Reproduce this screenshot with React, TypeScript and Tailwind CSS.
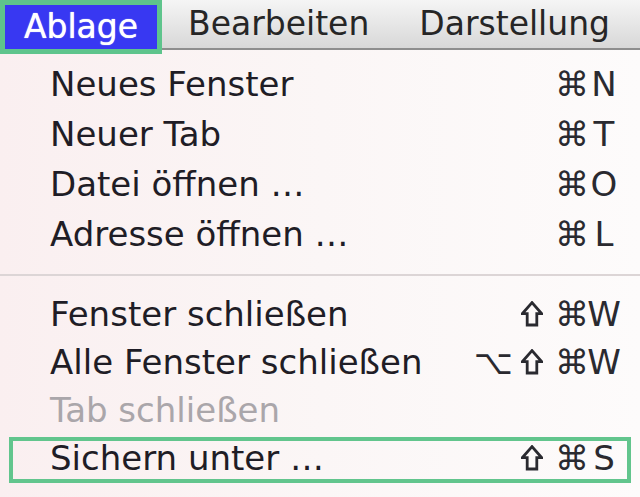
type Item = { label: string; mods?: string[]; key?: string; disabled?: boolean; marked?: boolean };

const groups: Item[][] = [
  [
    { label: 'Neues Fenster', mods: ['cmd'], key: 'N' },
    { label: 'Neuer Tab', mods: ['cmd'], key: 'T' },
    { label: 'Datei öffnen …', mods: ['cmd'], key: 'O' },
    { label: 'Adresse öffnen …', mods: ['cmd'], key: 'L' },
  ],
  [
    { label: 'Fenster schließen', mods: ['shift', 'cmd'], key: 'W' },
    { label: 'Alle Fenster schließen', mods: ['opt', 'shift', 'cmd'], key: 'W' },
    { label: 'Tab schließen', disabled: true },
    { label: 'Sichern unter …', mods: ['shift', 'cmd'], key: 'S', marked: true },
  ],
];

function ShiftIcon() {
  return (
    <svg width="22" height="26" viewBox="0 0 22 26" className="mr-[12px] block shrink-0">
      <path
        d="M11 1.6 L1.4 12.6 H6.2 V24 H15.8 V12.6 H20.6 Z"
        fill="none"
        stroke="#2a2a30"
        strokeWidth="2.8"
        strokeLinejoin="miter"
      />
    </svg>
  );
}

function Mod({ name }: { name: string }) {
  if (name === 'shift') return <ShiftIcon />;
  if (name === 'opt') return <span className="mr-[8px] shrink-0">⌥</span>;
  return <span className="-mr-[3px] shrink-0">⌘</span>;
}

function MenuRow({ item, tall }: { item: Item; tall: boolean }) {
  return (
    <div className={`relative flex items-center pl-[50px] pr-[18px] ${tall ? 'h-[50px]' : 'h-[48px]'}`}>
      <span className={`flex-1 ${item.disabled ? 'text-[#aaa6aa]' : 'text-[#1f1d26]'}`}>{item.label}</span>
      {item.key && (
        <span className="flex shrink-0 items-center text-[#2a2a30]">
          {item.mods?.map((m) => <Mod key={m} name={m} />)}
          <span className="w-[36px] shrink-0 text-center">{item.key}</span>
        </span>
      )}
      {item.marked && (
        <div className="absolute left-[9px] right-[9px] top-[3px] bottom-[-1px] border-[4px] border-[#62c58d]" />
      )}
    </div>
  );
}

export default function App() {
  return (
    <div className="w-[640px] h-[497px] overflow-hidden font-['DejaVu_Sans',sans-serif] bg-gradient-to-r from-[#faeff0] via-[#fbf6f6] to-[#fdfbfb]">
      <div className="flex h-[50px] bg-gradient-to-b from-[#f5f5f5] to-[#d8d8d8] border-b-2 border-[#8e8e8e] text-[33px] text-[#262626]">
        <div className="mt-[5px] ml-[5px] flex h-[44px] w-[152px] items-center justify-center bg-[#3838f2] text-white outline-[5px] outline-[#5ec48c] [text-shadow:0_0_1px_#fff]">
          Ablage
        </div>
        <div className="ml-[31px] flex items-center">Bearbeiten</div>
        <div className="ml-[50px] flex items-center">Darstellung</div>
      </div>
      <div className="pt-[9px] text-[34px] leading-none">
        {groups[0].map((it) => (
          <MenuRow key={it.label} item={it} tall />
        ))}
        <div className="flex h-[31px] items-center">
          <div className="h-[2px] w-full bg-[#dcd5d6]" />
        </div>
        {groups[1].map((it) => (
          <MenuRow key={it.label} item={it} tall={false} />
        ))}
      </div>
    </div>
  );
}
